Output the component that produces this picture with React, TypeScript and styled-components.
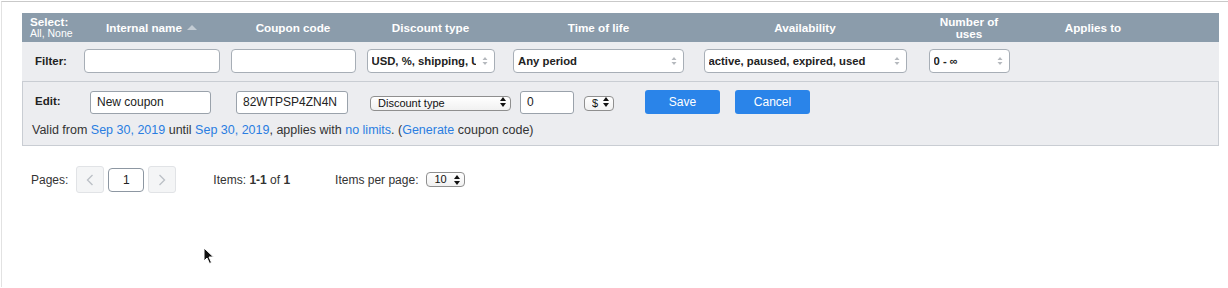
import React from "react";
import styled, { createGlobalStyle } from "styled-components";

const Global = createGlobalStyle`
  html, body { margin: 0; padding: 0; background: #fff; }
  body { font-family: "Liberation Sans", Arial, Helvetica, sans-serif; color: #333; }
  * { box-sizing: border-box; }
`;

const COLS = "56px 147px 136px 139px 197px 216px 112px 136px 1fr";

const Frame = styled.div`
  position: relative;
  margin: 1px 0 0 1px;
  border-top: 1px solid #c9c9c9;
  border-left: 1px solid #e2e2e2;
  min-height: 286px;
  padding: 11px 8px 0 20px;
`;

const Table = styled.div`
  width: 1197px;
`;

const HeaderRow = styled.div`
  display: grid;
  grid-template-columns: ${COLS};
  height: 29px;
  background: #8b9cab;
  color: #fff;
`;

const HeadCell = styled.div<{ $left?: boolean }>`
  display: flex;
  flex-direction: column;
  align-items: ${(p) => (p.$left ? "flex-start" : "center")};
  justify-content: center;
  padding-left: ${(p) => (p.$left ? "8px" : "0")};
  font-size: 11.7px;
  font-weight: bold;
  line-height: 12px;
  text-align: center;
  white-space: nowrap;
`;

const SubText = styled.span`
  font-weight: normal;
  font-size: 10.5px;
  line-height: 11px;
`;

const SortArrow = styled.span`
  display: inline-block;
  margin-left: 5px;
  width: 0;
  height: 0;
  border-left: 5px solid transparent;
  border-right: 5px solid transparent;
  border-bottom: 5px solid #c3ccd4;
  vertical-align: 2px;
`;

const FilterRow = styled.div`
  display: grid;
  grid-template-columns: ${COLS};
  height: 39px;
  align-items: center;
  background: #ecedf0;
  padding-bottom: 1px;
`;

const RowLabel = styled.div`
  font-size: 11.5px;
  font-weight: bold;
  color: #222;
  padding-left: 13px;
`;

const Cell = styled.div`
  display: flex;
  justify-content: center;
`;

const FilterInput = styled.input<{ $w: number }>`
  width: ${(p) => p.$w}px;
  height: 24px;
  border: 1px solid #a7aeb6;
  border-radius: 4px;
  background: #fff;
  outline: none;
`;

const SelWrap = styled.div<{ $w: number }>`
  position: relative;
  width: ${(p) => p.$w}px;
`;

const FilterSelect = styled.select`
  appearance: none;
  width: 100%;
  height: 24px;
  border: 1px solid #a7aeb6;
  border-radius: 4px;
  background: #fff;
  padding: 0 18px 0 4px;
  font-family: inherit;
  font-size: 11.3px;
  font-weight: bold;
  color: #222;
  outline: none;
`;

const Arrows = styled.svg`
  position: absolute;
  right: 7px;
  top: 50%;
  transform: translateY(-50%);
  pointer-events: none;
`;

const EditBlock = styled.div`
  background: #ecedf0;
  border: 1px solid #c9cdd3;
  padding: 8px 0 7px 9px;
`;

const EditLine = styled.div`
  display: flex;
  align-items: center;
  height: 24px;
`;

const EditLabel = styled.div`
  font-size: 11.5px;
  font-weight: bold;
  color: #222;
  width: 58px;
  padding-left: 3px;
  margin-top: -3px;
`;

const EditInput = styled.input<{ $w: number; $ml?: number }>`
  width: ${(p) => p.$w}px;
  margin-left: ${(p) => p.$ml ?? 0}px;
  height: 23px;
  border: 1px solid #9aa2ab;
  border-radius: 3px;
  background: #fff;
  padding: 0 6px;
  font-family: inherit;
  font-size: 12px;
  color: #222;
  outline: none;
`;

const MiniWrap = styled.div<{ $w: number; $ml: number }>`
  position: relative;
  width: ${(p) => p.$w}px;
  margin-left: ${(p) => p.$ml}px;
`;

const MiniSelect = styled.select`
  appearance: none;
  width: 100%;
  height: 15px;
  border: 1px solid #8f8f8f;
  border-radius: 4px;
  background: linear-gradient(#ffffff, #f1f1f1);
  padding: 0 14px 0 7px;
  font-family: inherit;
  font-size: 11px;
  line-height: 13px;
  color: #111;
  outline: none;
`;

const MiniArrows = styled.svg`
  position: absolute;
  right: 5px;
  top: 50%;
  transform: translateY(-50%);
  pointer-events: none;
`;

const Button = styled.button<{ $ml: number }>`
  margin-left: ${(p) => p.$ml}px;
  width: 75px;
  height: 24px;
  border: none;
  border-radius: 3px;
  background: #2a84e9;
  color: #fff;
  font-family: inherit;
  font-size: 12px;
`;

const Info = styled.div`
  margin-top: 9px;
  font-size: 12.5px;
  line-height: 15px;
  color: #333;
`;

const Link = styled.a`
  color: #2a7de1;
  text-decoration: none;
`;

const Pager = styled.div`
  display: flex;
  align-items: center;
  margin-top: 20px;
  padding-left: 9px;
  font-size: 12px;
  color: #333;
`;

const NavBtn = styled.div<{ $ml: number }>`
  display: flex;
  align-items: center;
  justify-content: center;
  width: 28px;
  height: 27px;
  margin-left: ${(p) => p.$ml}px;
  background: #f4f5f6;
  border: 1px solid #e1e3e6;
  border-radius: 3px;
`;

const PageInput = styled.div`
  display: flex;
  align-items: center;
  justify-content: center;
  width: 36px;
  height: 24px;
  margin-left: 4px;
  border: 1px solid #8d97a2;
  border-radius: 4px;
  background: #fff;
  font-size: 12px;
  color: #222;
`;

const PagerText = styled.span<{ $ml: number }>`
  margin-left: ${(p) => p.$ml}px;
  white-space: nowrap;
`;

const Cursor = styled.svg`
  position: absolute;
  left: 201px;
  top: 245px;
`;

const UpDown = ({ color }: { color: string }) => (
  <Arrows width="6" height="9" viewBox="0 0 6 9">
    <path d="M3 0.5 L5.5 3.5 L0.5 3.5 Z M3 8.5 L5.5 5.5 L0.5 5.5 Z" fill={color} />
  </Arrows>
);

const MiniUpDown = () => (
  <MiniArrows width="6" height="10" viewBox="0 0 6 10">
    <path d="M3 0 L6 4 L0 4 Z M3 10 L6 6 L0 6 Z" fill="#111" />
  </MiniArrows>
);

const FSelect = ({ w, value }: { w: number; value: string }) => (
  <SelWrap $w={w}>
    <FilterSelect defaultValue={value}>
      <option>{value}</option>
    </FilterSelect>
    <UpDown color="#b5b9be" />
  </SelWrap>
);

const MSelect = ({ w, ml, value }: { w: number; ml: number; value: string }) => (
  <MiniWrap $w={w} $ml={ml}>
    <MiniSelect defaultValue={value}>
      <option>{value}</option>
    </MiniSelect>
    <MiniUpDown />
  </MiniWrap>
);

export default function App() {
  return (
    <>
      <Global />
      <Frame>
        <Table>
          <HeaderRow>
            <HeadCell $left>
              <span>Select:</span>
              <SubText>All, None</SubText>
            </HeadCell>
            <HeadCell>
              <span>
                Internal name<SortArrow />
              </span>
            </HeadCell>
            <HeadCell>Coupon code</HeadCell>
            <HeadCell>Discount type</HeadCell>
            <HeadCell>Time of life</HeadCell>
            <HeadCell>Availability</HeadCell>
            <HeadCell>
              <span>Number of</span>
              <span>uses</span>
            </HeadCell>
            <HeadCell>Applies to</HeadCell>
            <HeadCell />
          </HeaderRow>
          <FilterRow>
            <RowLabel>Filter:</RowLabel>
            <Cell>
              <FilterInput $w={136} />
            </Cell>
            <Cell>
              <FilterInput $w={125} />
            </Cell>
            <Cell>
              <FSelect w={128} value="USD, %, shipping, USD off" />
            </Cell>
            <Cell>
              <FSelect w={171} value="Any period" />
            </Cell>
            <Cell>
              <FSelect w={203} value="active, paused, expired, used" />
            </Cell>
            <Cell>
              <FSelect w={81} value="0 - ∞" />
            </Cell>
            <Cell />
            <Cell />
          </FilterRow>
          <EditBlock>
            <EditLine>
              <EditLabel>Edit:</EditLabel>
              <EditInput $w={121} defaultValue="New coupon" />
              <EditInput $w={112} $ml={25} defaultValue="82WTPSP4ZN4N" />
              <MSelect w={141} ml={22} value="Discount type" />
              <EditInput $w={54} $ml={9} defaultValue="0" />
              <MSelect w={30} ml={10} value="$" />
              <Button $ml={31}>Save</Button>
              <Button $ml={15}>Cancel</Button>
            </EditLine>
            <Info>
              Valid from <Link>Sep 30, 2019</Link> until <Link>Sep 30, 2019</Link>, applies with{" "}
              <Link>no limits</Link>. (<Link>Generate</Link> coupon code)
            </Info>
          </EditBlock>
        </Table>
        <Pager>
          <span>Pages:</span>
          <NavBtn $ml={8}>
            <svg width="8" height="12" viewBox="0 0 8 12">
              <path d="M6.5 1 L1.5 6 L6.5 11" stroke="#bcc1c7" strokeWidth="1.4" fill="none" />
            </svg>
          </NavBtn>
          <PageInput>1</PageInput>
          <NavBtn $ml={4}>
            <svg width="8" height="12" viewBox="0 0 8 12">
              <path d="M1.5 1 L6.5 6 L1.5 11" stroke="#bcc1c7" strokeWidth="1.4" fill="none" />
            </svg>
          </NavBtn>
          <PagerText $ml={37}>
            Items: <b>1-1</b> of <b>1</b>
          </PagerText>
          <PagerText $ml={45}>Items per page:</PagerText>
          <MSelect w={39} ml={8} value="10" />
        </Pager>
        <Cursor width="12" height="18" viewBox="0 0 12 18">
          <path d="M1 1 L1 14 L4 11 L6.5 16.5 L8.5 15.5 L6 10 L10.5 10 Z" fill="#111" stroke="#fff" strokeWidth="1" />
        </Cursor>
      </Frame>
    </>
  );
}
